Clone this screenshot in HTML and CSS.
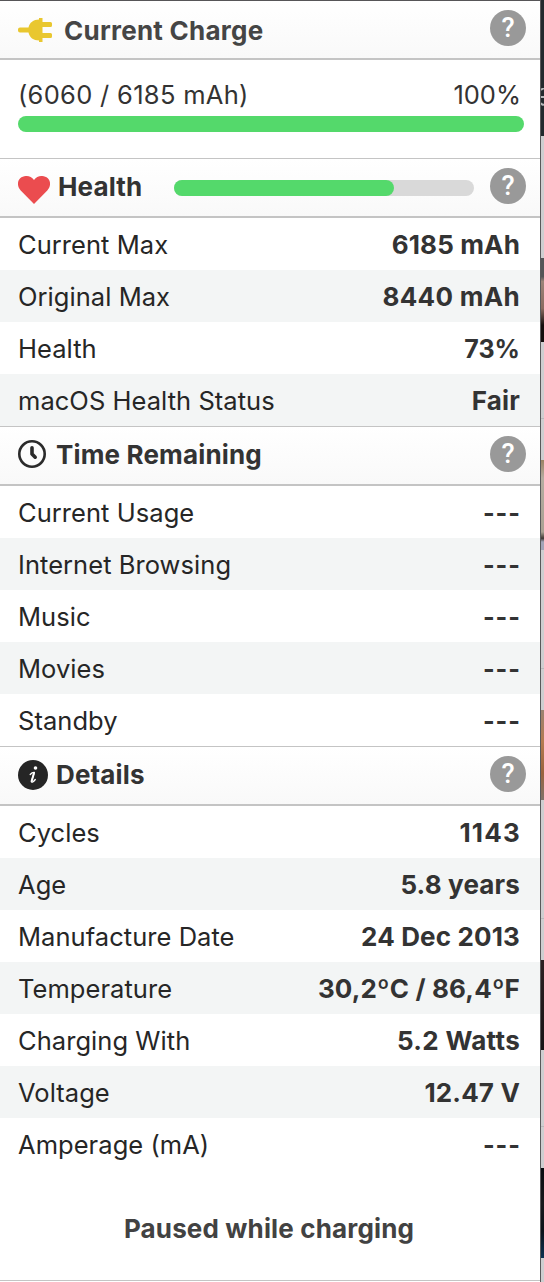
FILE: index.html
```
<!DOCTYPE html>
<html lang="en">
<head>
<meta charset="utf-8">
<title>Battery</title>
<link rel="stylesheet" href="styles.css">
</head>
<body>
<div class="screen">
<main class="panel">
  <header class="head head-charge">
    <svg class="icon" width="35" height="24" viewBox="0 0 35 24" fill="#e9c72f"><path d="M2 9.500H10.500C11.500 4.500 15.500 1.500 21 1.500V0h3.500v4H32.500a1.500 1.500 0 0 1 1.500 1.500v2a1.500 1.500 0 0 1-1.500 1.500H24.500v6H32.500a1.500 1.500 0 0 1 1.500 1.500v2a1.500 1.500 0 0 1-1.500 1.500H24.500v4H21v-1.500C15.500 22.500 11.500 19.500 10.500 14.500H2a2 2 0 0 1-2-2v-1a2 2 0 0 1 2-2z"/></svg>
    <h2>Current Charge</h2><span class="help">?</span>
  </header>
  <section class="charge">
    <div class="charge-text"><span class="capacity">(6060 / 6185 mAh)</span><span class="percent">100%</span></div>
    <div class="bar bar-full"></div>
  </section>
  <header class="head head-health">
    <svg class="icon" width="32" height="28" viewBox="0 0 32 28" fill="#eb4c4f"><path d="M16 28L2.700 14.500C-1 10.500-.8 5 2.200 2.300C6-1.200 12.500-.8 16 4C19.500-.8 26-1.200 29.800 2.300C32.800 5 33 10.500 29.300 14.500z"/></svg>
    <h2>Health</h2><div class="bar track"><div class="bar fill"></div></div><span class="help">?</span>
  </header>
  <dl class="rows">
    <div class="row"><dt>Current Max</dt><dd>6185 mAh</dd></div>
    <div class="row"><dt>Original Max</dt><dd class="wide">8440 mAh</dd></div>
    <div class="row"><dt>Health</dt><dd class="percent-value">73%</dd></div>
    <div class="row"><dt>macOS Health Status</dt><dd>Fair</dd></div>
  </dl>
  <header class="head head-time">
    <svg class="icon" width="28" height="28" viewBox="0 0 28 28" fill="none" stroke="#2b2b2b"><circle cx="14" cy="14" r="12.700" stroke-width="2.600"/><path d="M14 7.800V14L17.200 17.200" stroke-width="3.600" stroke-linecap="round" stroke-linejoin="round"/></svg>
    <h2>Time Remaining</h2><span class="help">?</span>
  </header>
  <dl class="rows">
    <div class="row"><dt>Current Usage</dt><dd class="dash">---</dd></div>
    <div class="row"><dt>Internet Browsing</dt><dd class="dash">---</dd></div>
    <div class="row"><dt>Music</dt><dd class="dash">---</dd></div>
    <div class="row"><dt>Movies</dt><dd class="dash">---</dd></div>
    <div class="row"><dt>Standby</dt><dd class="dash">---</dd></div>
  </dl>
  <header class="head head-details">
    <svg class="icon" width="30" height="30" viewBox="0 0 30 30"><circle cx="15" cy="15" r="15" fill="#252525"/><circle cx="17.500" cy="8" r="1.800" fill="#fff"/><path d="M12.200 14.500C13.500 13 15 12.200 16.400 12.400L13.400 21.200C13 22.900 15.300 22.300 17.300 19.500" fill="none" stroke="#fff" stroke-width="1.300" stroke-linecap="round" stroke-linejoin="round"/><path d="M16 13L13.600 21.500" stroke="#fff" stroke-width="2"/></svg>
    <h2>Details</h2><span class="help">?</span>
  </header>
  <dl class="rows">
    <div class="row"><dt>Cycles</dt><dd class="count">1143</dd></div>
    <div class="row"><dt>Age</dt><dd>5.8 years</dd></div>
    <div class="row"><dt>Manufacture Date</dt><dd>24 Dec 2013</dd></div>
    <div class="row"><dt>Temperature</dt><dd>30,2ºC / 86,4ºF</dd></div>
    <div class="row"><dt>Charging With</dt><dd class="wide">5.2 Watts</dd></div>
    <div class="row"><dt>Voltage</dt><dd>12.47 V</dd></div>
    <div class="row"><dt>Amperage (mA)</dt><dd class="dash">---</dd></div>
  </dl>
  <footer class="status">Paused while charging</footer>
</main>
<aside class="backdrop">
  <div class="toolbar"><svg width="3" height="18" viewBox="0 0 3 18" fill="none" stroke="#b5b8ba" stroke-width="2"><path d="M0 2Q2 0 3 1M0 9H3M0 15Q2 18 3 16"/></svg></div>
  <div class="gap gap-first"></div>
  <div class="photo photo-a"></div>
  <div class="gap gap-short"></div>
  <div class="photo photo-b"></div>
  <div class="gap"></div>
  <div class="photo photo-c"></div>
  <div class="gap"></div>
  <div class="photo photo-d"></div>
  <div class="gap gap-short"></div>
  <div class="photo photo-e"></div>
  <div class="gap gap-last"></div>
</aside>
</div>
</body>
</html>
```
FILE: styles.css
```
* { box-sizing: border-box; }
body { margin: 0; font-family: Inter, "Liberation Sans", sans-serif; font-size: 25.5px; color: #262626; }
h2, dl, dt, dd { margin: 0; }
.screen { display: flex; width: 544px; height: 1282px; overflow: hidden; }
.panel { width: 541px; background: #fff; border-top: 1px solid #565558; border-right: 1px solid #59595b; }
.head { display: flex; align-items: center; height: 60px; padding: 0 14px 0 18px; border-top: 1px solid #c4c4c4; border-bottom: 2px solid #c4c4c4; background: linear-gradient(#fff, #f9f9f9); }
.head h2 { padding-bottom: 2px; font-size: 26px; line-height: 55px; font-weight: 700; letter-spacing: 0.15px; color: #333; white-space: nowrap; }
.icon { flex: none; }
.help { flex: none; width: 36px; height: 36px; margin: 0 0 3px auto; border-radius: 50%; background: #999; color: #fff; font-family: Roboto, sans-serif; font-size: 27px; font-weight: 500; line-height: 36px; text-align: center; }
.head-charge { height: 59px; border-top: 0; }
.head-charge h2 { margin-left: 11px; padding: 3px 0 0; line-height: 54px; letter-spacing: 0.25px; color: #454545; }
.head-health h2 { width: 116px; margin-left: 8px; }
.head-health .icon { margin-top: 4px; }
.head-time h2 { margin-left: 10px; }
.head-time .icon { margin-bottom: 3px; }
.head-details h2 { margin-left: 8px; }
.head-details .icon { margin-bottom: 1px; }
.bar { height: 16px; border-radius: 8px; background: #54d96b; }
.charge { height: 98px; padding: 10px 16px 0 18px; }
.charge-text { display: flex; justify-content: space-between; height: 46px; padding-right: 4px; line-height: 50px; color: #333; }
.capacity { letter-spacing: 0.3px; }
.percent { margin-right: -1px; }
.track { width: 300px; background: #d9d9d9; }
.fill { width: 73.300%; }
.row { display: flex; justify-content: space-between; height: 52px; padding: 1px 20px 0 18px; line-height: 52px; white-space: nowrap; }
.row:nth-child(even) { background: #f3f5f5; }
.row dt { letter-spacing: 0.05px; }
.row dd { font-size: 26px; font-weight: 700; color: #333; letter-spacing: 0.15px; }
.row .wide { letter-spacing: 0.3px; }
.row .count { letter-spacing: 1.2px; margin-right: -1px; }
.row .percent-value { font-size: 25px; letter-spacing: 0; }
.row .dash { font-size: 25px; letter-spacing: 1px; margin-right: -1px; }
.status { height: 111px; padding-top: 7px; border-bottom: 1px solid #c4c4c4; color: #424242; font-size: 26px; font-weight: 700; letter-spacing: 0.15px; line-height: 104px; text-align: center; padding-right: 2px; }
.backdrop { width: 3px; background: #ceced0; }
.toolbar { height: 136px; padding-top: 88px; background: #22292d; }
.toolbar svg { display: block; }
.gap { height: 160px; padding-top: 118px; }
.gap::before { content: ""; display: block; height: 1px; background: #b9b9bb; }
.gap-first { height: 122px; padding: 0; }
.gap-first::before { display: none; }
.gap-short { height: 118px; padding-top: 76px; }
.gap-last { height: 24px; padding: 0; }
.gap-last::before { display: none; }
.photo { height: 90px; }
.photo-a { height: 84px; background: linear-gradient(#545557 0 22%, #9c8378 28%, #8b6b60 60%, #140e0d 80%); }
.photo-b { background: linear-gradient(#9b8263, #b5aca0 20%, #aaa193 80%, #403834 87%, #a3a4b8 91%); }
.photo-c { background: linear-gradient(#9b8371, #b57b50 35%, #9a633d 70%, #80736a); }
.photo-d { background: linear-gradient(#2c2022, #171315); }
.photo-e { background: linear-gradient(#080c10, #17191c 40%, #0b1219 70%, #0c3152); }
```
